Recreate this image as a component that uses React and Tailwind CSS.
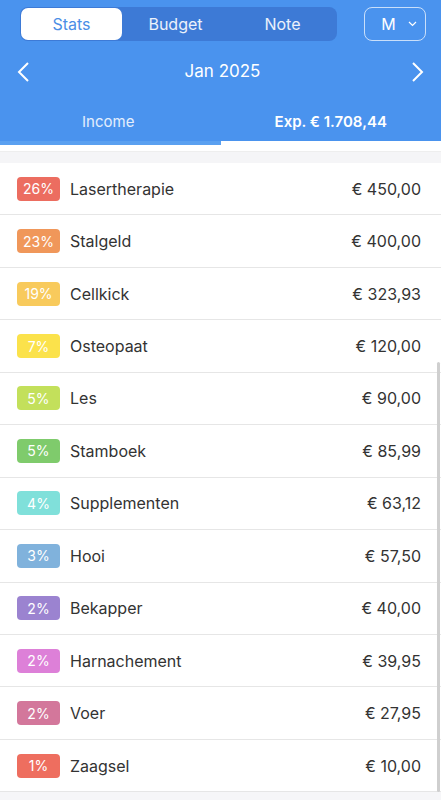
import React from 'react';

const rows = [
  { pct: '26%', name: 'Lasertherapie', amount: '€ 450,00', color: 'bg-[#ec6d60]' },
  { pct: '23%', name: 'Stalgeld', amount: '€ 400,00', color: 'bg-[#f0975a]' },
  { pct: '19%', name: 'Cellkick', amount: '€ 323,93', color: 'bg-[#f8ca5c]' },
  { pct: '7%', name: 'Osteopaat', amount: '€ 120,00', color: 'bg-[#fbe24b]' },
  { pct: '5%', name: 'Les', amount: '€ 90,00', color: 'bg-[#c3e05b]' },
  { pct: '5%', name: 'Stamboek', amount: '€ 85,99', color: 'bg-[#7fcb6c]' },
  { pct: '4%', name: 'Supplementen', amount: '€ 63,12', color: 'bg-[#80e0da]' },
  { pct: '3%', name: 'Hooi', amount: '€ 57,50', color: 'bg-[#80b2dc]' },
  { pct: '2%', name: 'Bekapper', amount: '€ 40,00', color: 'bg-[#9b83d0]' },
  { pct: '2%', name: 'Harnachement', amount: '€ 39,95', color: 'bg-[#dd80d8]' },
  { pct: '2%', name: 'Voer', amount: '€ 27,95', color: 'bg-[#d3779b]' },
  { pct: '1%', name: 'Zaagsel', amount: '€ 10,00', color: 'bg-[#ee6e5f]' },
];

export default function App() {
  return (
    <div className="w-[441px] h-[800px] overflow-hidden bg-[#f6f6f8] font-['Inter','Liberation_Sans',sans-serif] relative">
      <div className="bg-[#4a93ee] text-white">
        <div className="flex items-center pt-[7px] pl-5 pr-[15px]">
          <div className="flex w-[317px] h-[34px] rounded-lg bg-[#3d7ad6] p-px">
            <div className="w-[101px] rounded-[7px] bg-white text-[#4a8ee6] text-[16px] flex items-center justify-center">Stats</div>
            <div className="flex-1 flex items-center justify-center text-[16px] text-white/90">Budget</div>
            <div className="flex-1 flex items-center justify-center text-[16px] text-white/90">Note</div>
          </div>
          <div className="ml-auto w-[62px] h-[34px] border border-white/70 rounded-lg flex items-center justify-center gap-3 text-[16px]">
            <span className="pl-2">M</span>
            <svg width="9" height="6" viewBox="0 0 9 6" fill="none" stroke="white" strokeWidth="1.2"><path d="M1 1l3.5 3.5L8 1" /></svg>
          </div>
        </div>
        <div className="flex items-center justify-between px-4 h-[62px]">
          <svg width="14" height="22" viewBox="0 0 14 22" fill="none" stroke="white" strokeWidth="2"><path d="M12 2L3 11l9 9" /></svg>
          <span className="text-[17px] pl-1">Jan 2025</span>
          <svg width="14" height="22" viewBox="0 0 14 22" fill="none" stroke="white" strokeWidth="2"><path d="M2 2l9 9-9 9" /></svg>
        </div>
        <div className="flex h-[42px]">
          <div className="flex-1 flex flex-col">
            <div className="flex-1 flex items-center justify-center text-[15px] text-white/85 pr-1">Income</div>
            <div className="h-[4px] bg-[#5aa0f0]" />
          </div>
          <div className="flex-1 flex flex-col">
            <div className="flex-1 flex items-center justify-center text-[15px] font-semibold">Exp. € 1.708,44</div>
            <div className="h-[4px] bg-white" />
          </div>
        </div>
      </div>
      <div className="h-[6px] bg-white" />
      <div className="h-[12px] bg-[#f5f5f7] border-t border-[#eeeeee]" />
      <div className="bg-white">
        {rows.map((r, i) => (
          <div key={i} className="flex items-center h-[52.45px] pl-[17px] pr-5 border-b border-[#e6e6e6]">
            <div className={`w-[43px] h-[24px] rounded-[4px] ${r.color} text-white text-[14px] flex items-center justify-center`}>{r.pct}</div>
            <div className="ml-[10px] text-[16px] text-[#333333]">{r.name}</div>
            <div className="ml-auto text-[16px] text-[#333333]">{r.amount}</div>
          </div>
        ))}
      </div>
      <div className="absolute right-[1px] top-[362px] w-[3px] h-[430px] rounded-full bg-[#cfcfcf]" />
    </div>
  );
}
